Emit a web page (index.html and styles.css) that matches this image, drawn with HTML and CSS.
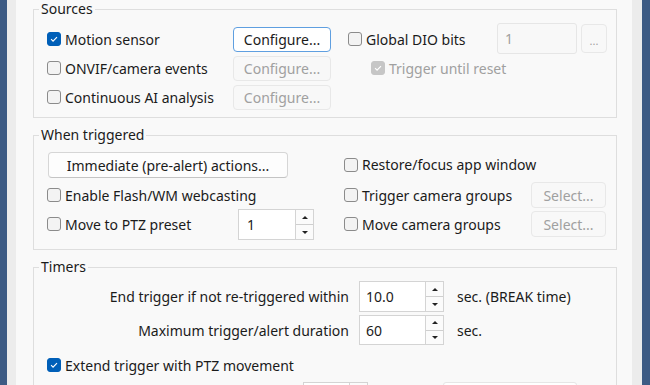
FILE: index.html
```html
<!DOCTYPE html>
<html lang="en">
<head>
    <meta charset="UTF-8">
    <title>Alert triggers</title>
    <link rel="stylesheet" href="styles.css">
</head>
<body>
    <div class="window">
        <div class="edge"></div>
        <div class="panel">

            <fieldset class="group">
                <legend>Sources</legend>
                <div class="grid sources-grid">
                    <label class="check c1"><span class="box on"><svg viewBox="0 0 14 14"><path d="M3.6 7.2l2.3 2.3 4.6-4.8"/></svg></span>Motion sensor</label>
                    <button class="btn focus c2">Configure...</button>
                    <label class="check c4"><span class="box"></span>Global DIO bits</label>
                    <div class="field c5">1</div>
                    <button class="btn off dots c7">...</button>

                    <label class="check c1"><span class="box"></span>ONVIF/camera events</label>
                    <button class="btn off c2">Configure...</button>
                    <label class="check off c4 indent"><span class="box on"><svg viewBox="0 0 14 14"><path d="M3.6 7.2l2.3 2.3 4.6-4.8"/></svg></span>Trigger until reset</label>

                    <label class="check c1"><span class="box"></span>Continuous AI analysis</label>
                    <button class="btn off c2">Configure...</button>
                </div>
            </fieldset>

            <fieldset class="group">
                <legend>When triggered</legend>
                <div class="grid when-grid">
                    <button class="btn wide">Immediate (pre-alert) actions...</button>
                    <label class="check w4 lift"><span class="box"></span>Restore/focus app window</label>

                    <label class="check w1"><span class="box"></span>Enable Flash/WM webcasting</label>
                    <label class="check w4"><span class="box"></span>Trigger camera groups</label>
                    <button class="btn off w5">Select...</button>

                    <label class="check w1"><span class="box"></span>Move to PTZ preset</label>
                    <div class="spin w2">
                        <span class="spin-value">1</span>
                        <span class="spin-btns"><span class="up"></span><span class="down"></span></span>
                    </div>
                    <label class="check w4"><span class="box"></span>Move camera groups</label>
                    <button class="btn off w5">Select...</button>
                </div>
            </fieldset>

            <fieldset class="group timers">
                <legend>Timers</legend>
                <div class="grid timers-grid">
                    <span class="t-label">End trigger if not re-triggered within</span>
                    <div class="spin t-spin">
                        <span class="spin-value">10.0</span>
                        <span class="spin-btns"><span class="up"></span><span class="down"></span></span>
                    </div>
                    <span class="t-unit">sec. (BREAK time)</span>

                    <span class="t-label">Maximum trigger/alert duration</span>
                    <div class="spin t-spin">
                        <span class="spin-value">60</span>
                        <span class="spin-btns"><span class="up"></span><span class="down"></span></span>
                    </div>
                    <span class="t-unit">sec.</span>

                    <label class="check t-full"><span class="box on"><svg viewBox="0 0 14 14"><path d="M3.6 7.2l2.3 2.3 4.6-4.8"/></svg></span>Extend trigger with PTZ movement</label>

                    <div class="t-row">
                        <div class="spin small-spin">
                            <span class="spin-value"></span>
                            <span class="spin-btns"><span class="up"></span><span class="down"></span></span>
                        </div>
                        <div class="field cut"></div>
                    </div>
                </div>
            </fieldset>

        </div>
        <div class="edge right"></div>
    </div>
</body>
</html>
```

FILE: styles.css
```css
:root {
    --frame-blue: #3d5b84;
    --strip: #ececec;
    --panel: #f9f9f9;
    --group-line: #dedede;
    --text: #1b1b1b;
    --text-off: #a0a0a0;
    --accent: #005fb8;
}
* {
    box-sizing: border-box;
}
html, body {
    margin: 0;
    height: 385px;
    overflow: hidden;
}
body {
    font-family: "Noto Sans", "Open Sans", sans-serif;
    font-size: 14px;
    color: var(--text);
    background: var(--strip);
}
.window {
    display: flex;
    height: 385px;
}
.edge {
    width: 16px;
    border-left: 7px solid var(--frame-blue);
    background: var(--strip);
}
.edge.right {
    width: 18px;
    border-left: none;
    border-right: 8px solid var(--frame-blue);
}
.panel {
    width: 616px;
    background: var(--panel);
    padding: 0 15px 0 17px;
}
.group {
    margin: 0 0 8px;
    padding: 8px 0 7px 13px;
    border: 1px solid var(--group-line);
    border-radius: 0;
    min-width: 0;
}
.group legend {
    padding: 0 2px;
    margin-left: -8px;
    line-height: 18px;
}
.grid {
    display: grid;
    align-items: center;
}
.check {
    display: flex;
    align-items: center;
    gap: 4px;
    white-space: nowrap;
}
.check.off {
    color: var(--text-off);
}
.box {
    width: 14px;
    height: 14px;
    border: 1px solid #8b8b8b;
    border-radius: 3px;
    background: #f3f3f3;
    flex: none;
    display: flex;
}
.box svg {
    width: 12px;
    height: 12px;
    fill: none;
    stroke: #fff;
    stroke-width: 1.3;
}
.box.on {
    background: var(--accent);
    border-color: var(--accent);
}
.check.off .box.on {
    background: #c6c6c6;
    border-color: #c6c6c6;
}
.btn {
    font: inherit;
    color: var(--text);
    background: #fdfdfd;
    border: 1px solid #d6d6d6;
    border-bottom-color: #c4c4c4;
    border-radius: 4px;
    height: 25px;
    padding: 0;
}
.btn.focus {
    border-color: #5f9fe0;
    background: #fff;
}
.btn.off {
    color: var(--text-off);
    background: #f8f8f8;
    border-color: #e8e8e8;
}
.field {
    height: 31px;
    border: 1px solid #e6e6e6;
    border-radius: 3px;
    background: #f8f8f8;
    color: var(--text-off);
    padding-left: 7px;
    line-height: 29px;
}

/* sources */
.sources-grid {
    grid-template-columns: 186px 98px 17px 149px 80px 4px 26px;
    grid-template-rows: 26px 26px 26px;
    row-gap: 3px;
}
.c1 { grid-column: 1; }
.c2 { grid-column: 2; }
.c4 { grid-column: 4; }
.c5 { grid-column: 5; margin: -3px 0 -2px; }
.c7 { grid-column: 7; height: 29px; margin: -2px 0 -1px; }
.indent {
    grid-column: 4 / span 4;
    padding-left: 23px;
}
.dots {
    font-size: 11px;
    line-height: 1;
    padding-top: 4px;
}

/* when triggered */
.when-grid {
    grid-template-columns: 191px 76px 30px 187px 75px;
    grid-template-rows: 27px 26px 26px;
    row-gap: 3px;
    padding-bottom: 5px;
}
.wide {
    grid-column: 1 / 3;
    align-self: start;
    width: 240px;
    height: 26px;
    margin-left: 1px;
}
.w1 { grid-column: 1; }
.w2 { grid-column: 2; }
.w4 { grid-column: 4; }
.w5 { grid-column: 5; height: 26px; }
.lift {
    margin-top: -2px;
}
.when-grid .w2 {
    height: 31px;
    margin: -2px 0 -3px;
}

/* spin boxes */
.spin {
    display: flex;
    height: 31px;
    border: 1px solid #d4d4d4;
    background: #fff;
}
.spin-value {
    flex: 1;
    padding-left: 8px;
    line-height: 29px;
}
.spin-btns {
    width: 18px;
    display: flex;
    flex-direction: column;
    border-left: 1px solid #d4d4d4;
}
.spin-btns span {
    flex: 1;
    display: flex;
    align-items: center;
    justify-content: center;
    background: #fbfbfb;
    border: 1px solid #cfcfcf;
    border-left: none;
    border-right: none;
}
.spin-btns .up {
    border-top: none;
}
.spin-btns .down {
    border-top: none;
    border-bottom: none;
}
.spin-btns span::after {
    content: "";
    border-left: 3px solid transparent;
    border-right: 3px solid transparent;
}
.spin-btns .up::after {
    border-bottom: 3px solid #222;
}
.spin-btns .down::after {
    border-top: 3px solid #222;
}

/* timers */
.timers {
    padding-top: 5px;
}
.timers-grid {
    grid-template-columns: 302px 85px auto;
    grid-template-rows: 31px 30px 34px 26px;
    column-gap: 10px;
    row-gap: 3px;
}
.t-label {
    text-align: right;
    white-space: nowrap;
}
.t-spin {
    height: 100%;
}
.t-spin .spin-value {
    padding-left: 6px;
}
.t-unit {
    padding-left: 3px;
}
.t-full {
    grid-column: 1 / 4;
}
.t-row {
    grid-column: 1 / 4;
    display: flex;
    align-self: start;
    margin-top: -3px;
    padding-left: 256px;
}
.small-spin {
    width: 65px;
    height: 26px;
}
.cut {
    width: 134px;
    height: 26px;
    margin-left: 75px;
    background: #fff;
}
```
